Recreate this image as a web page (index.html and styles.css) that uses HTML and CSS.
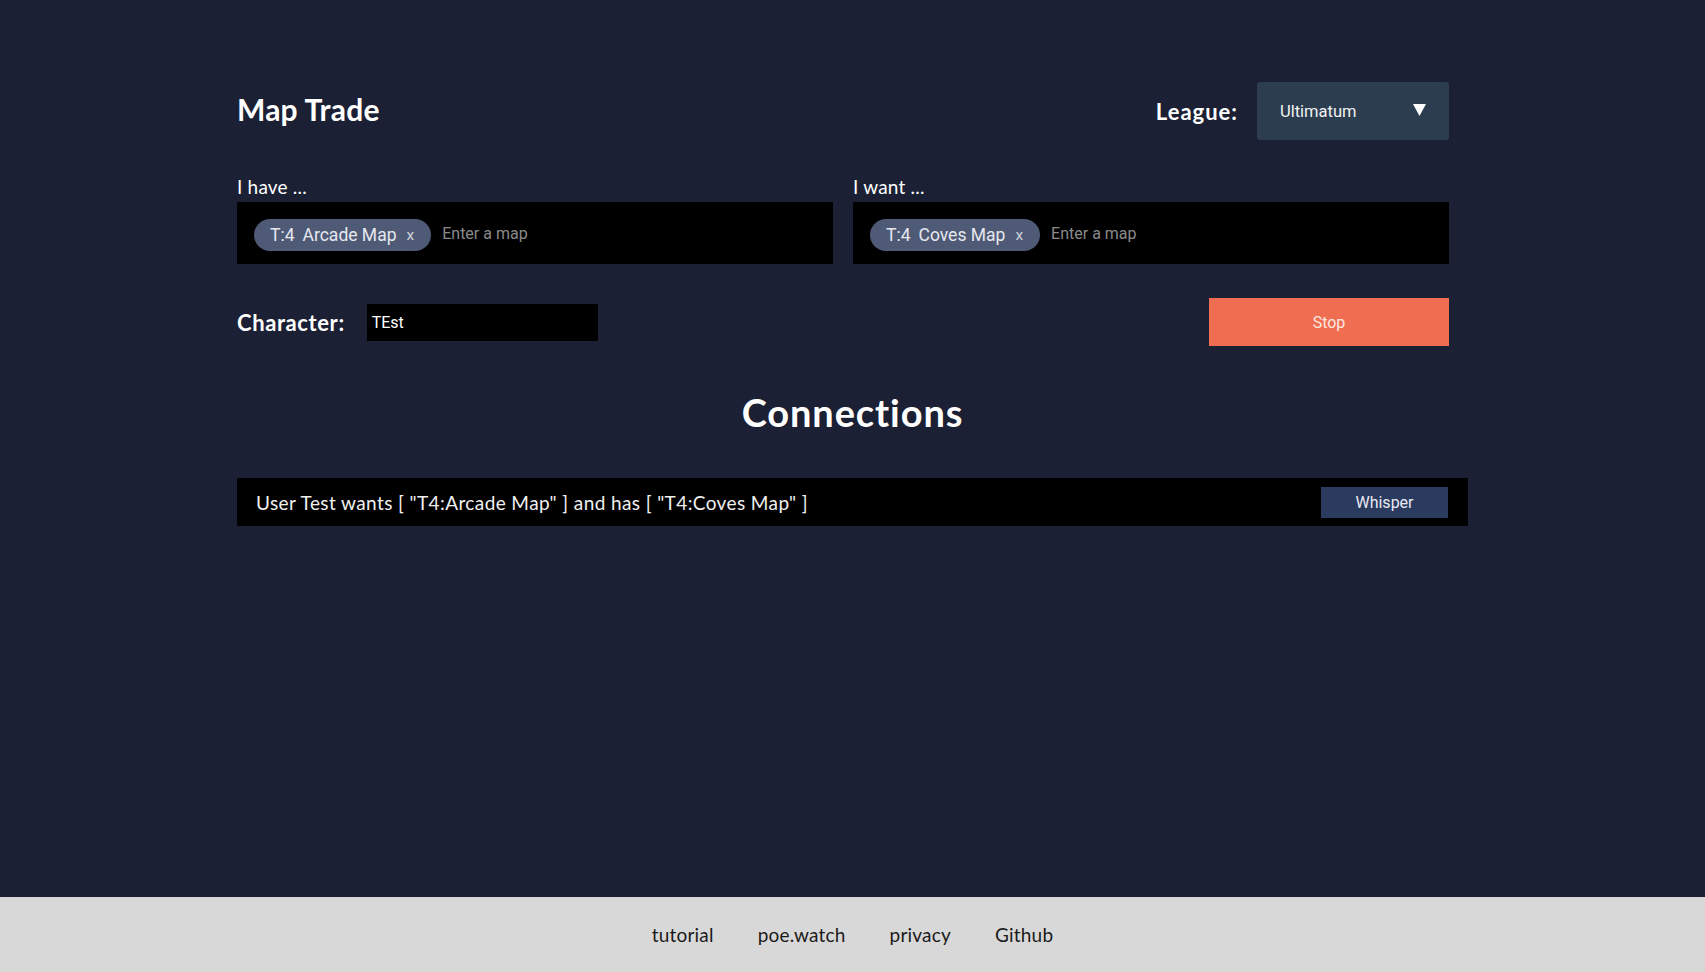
FILE: index.html
```html
<!DOCTYPE html>
<html lang="en">
<head>
<meta charset="utf-8">
<title>Map Trade</title>
<link rel="stylesheet" href="styles.css">
</head>
<body>
<div class="page">
  <main class="main">
    <header class="header">
      <h1 class="title">Map Trade</h1>
      <div class="league">
        <span class="league-label">League:</span>
        <div class="select">
          <span class="select-value">Ultimatum</span>
          <svg class="select-arrow" width="13" height="12" viewBox="0 0 13 12"><polygon points="0,0 13,0 6.5,12" fill="#ffffff"/></svg>
        </div>
      </div>
    </header>

    <section class="maps">
      <div class="map-col">
        <div class="map-label">I have ...</div>
        <div class="map-box">
          <span class="chip"><span class="chip-tier">T:4</span><span class="chip-name">Arcade Map</span><span class="chip-x">x</span></span>
          <span class="placeholder">Enter a map</span>
        </div>
      </div>
      <div class="map-col">
        <div class="map-label">I want ...</div>
        <div class="map-box">
          <span class="chip"><span class="chip-tier">T:4</span><span class="chip-name">Coves Map</span><span class="chip-x">x</span></span>
          <span class="placeholder">Enter a map</span>
        </div>
      </div>
    </section>

    <section class="char-row">
      <div class="char">
        <span class="char-label">Character:</span>
        <div class="char-input">TEst</div>
      </div>
      <button class="stop">Stop</button>
    </section>

    <h2 class="connections-title">Connections</h2>

    <div class="connection">
      <span class="connection-text">User Test wants [ "T4:Arcade Map" ] and has [ "T4:Coves Map" ]</span>
      <button class="whisper">Whisper</button>
    </div>
  </main>

  <footer class="footer">
    <a class="footer-link">tutorial</a>
    <a class="footer-link">poe.watch</a>
    <a class="footer-link">privacy</a>
    <a class="footer-link">Github</a>
  </footer>
</div>
</body>
</html>
```

FILE: styles.css
```css
* { box-sizing: border-box; }

html, body {
  margin: 0;
  padding: 0;
  background: #1b2034;
  font-family: "Lato", "Noto Sans", sans-serif;
  color: #ffffff;
}

.page {
  min-height: 100vh;
  display: flex;
  flex-direction: column;
}

.main {
  flex: 1;
  width: 1231px;
  margin-left: 237px;
  padding-top: 82px;
}

.header,
.maps,
.char-row {
  margin-right: 19px;
}

.header {
  display: flex;
  align-items: center;
  justify-content: space-between;
  height: 58px;
}

.title {
  margin: -4px 0 0 0;
  font-size: 30px;
  font-weight: 700;
  letter-spacing: 0.2px;
}

.league {
  display: flex;
  align-items: center;
  gap: 19px;
}

.league-label {
  font-size: 22px;
  font-weight: 700;
  letter-spacing: 1px;
}

.select {
  width: 192px;
  height: 58px;
  background: #2c3d50;
  border-radius: 3px;
  display: flex;
  align-items: center;
  justify-content: space-between;
  padding: 0 23px 0 23px;
}

.select-value {
  font-family: "Roboto", sans-serif;
  font-size: 16.5px;
  color: #f2f2f2;
}

.select-arrow { margin-top: -3px; }

.maps {
  display: grid;
  grid-template-columns: 1fr 1fr;
  gap: 20px;
  margin-top: 36px;
}

.map-label {
  font-size: 19px;
  font-weight: 400;
  line-height: 22px;
  margin-bottom: 4px;
  letter-spacing: 0.2px;
}

.map-box {
  background: #000000;
  height: 62px;
  display: flex;
  align-items: center;
  padding: 3px 17px 0 17px;
  gap: 11px;
}

.chip {
  display: inline-flex;
  align-items: center;
  height: 32px;
  border-radius: 16px;
  background: #4f5a76;
  padding: 0 17px 0 16px;
  font-family: "Roboto", sans-serif;
  font-size: 17.5px;
  color: #e6e8ef;
}

.chip-tier { margin-right: 8px; }
.chip-x { margin-left: 10px; font-size: 15.5px; color: #d0d3dc; }

.placeholder {
  font-family: "Roboto", sans-serif;
  font-size: 16px;
  color: #8a8a8a;
  margin-top: -2px;
}

.char-row {
  display: flex;
  align-items: center;
  justify-content: space-between;
  margin-top: 34px;
}

.char {
  display: flex;
  align-items: center;
  gap: 22px;
}

.char-label {
  font-size: 22px;
  font-weight: 700;
  letter-spacing: 0.6px;
}

.char-input {
  width: 231px;
  height: 37px;
  background: #000000;
  font-family: "Roboto", sans-serif;
  font-size: 16px;
  color: #ffffff;
  display: flex;
  align-items: center;
  padding-left: 5px;
}

.stop {
  width: 240px;
  height: 48px;
  border: none;
  background: #ef6d50;
  color: #fde8e0;
  font-family: "Roboto", sans-serif;
  font-size: 16px;
  padding: 0;
}

.connections-title {
  margin: 44px 0 0 0;
  text-align: center;
  font-size: 38px;
  font-weight: 700;
  line-height: 44px;
  letter-spacing: 0.9px;
}

.connection {
  margin-top: 44px;
  height: 48px;
  background: #000000;
  display: flex;
  align-items: center;
  justify-content: space-between;
  padding: 0 20px 0 19px;
}

.connection-text {
  font-size: 19px;
  font-weight: 400;
  color: #f0f0f0;
  letter-spacing: 0.4px;
}

.whisper {
  width: 127px;
  height: 31px;
  border: none;
  background: #2b3a5f;
  color: #e8eaf2;
  font-family: "Roboto", sans-serif;
  font-size: 16px;
  padding: 0;
  margin-top: 1px;
}

.footer {
  height: 75px;
  background: #d9d8d9;
  display: flex;
  align-items: center;
  justify-content: center;
  gap: 44px;
  padding-left: 0;
}

.footer-link {
  font-size: 19px;
  color: #1a1a1a;
  text-decoration: none;
  letter-spacing: 0.2px;
}
```
